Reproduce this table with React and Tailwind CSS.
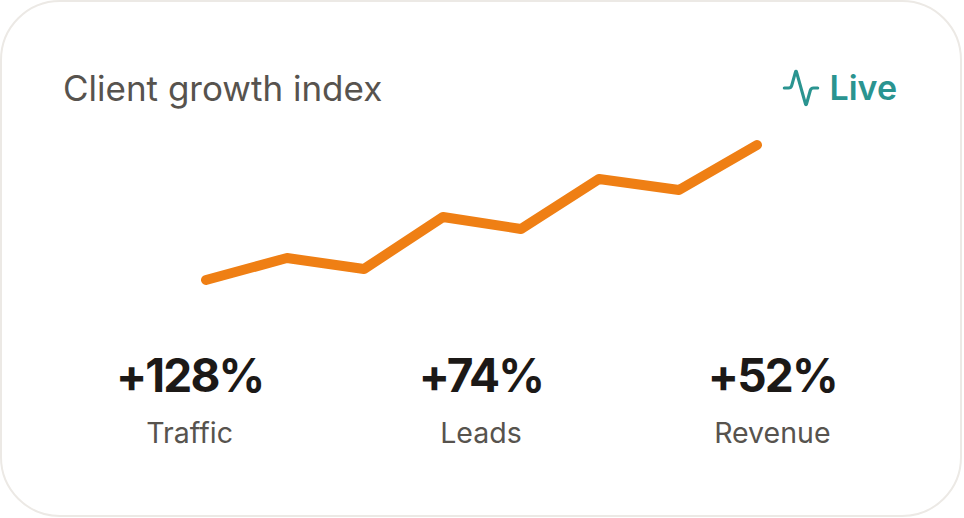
import React from 'react';
import { Activity } from 'lucide-react';

const points = [
  [206, 280],
  [287, 258],
  [364, 269],
  [443, 217],
  [521, 229],
  [599, 179],
  [679, 190],
  [757, 145],
];

const stats = [
  { value: '+128%', label: 'Traffic' },
  { value: '+74%', label: 'Leads' },
  { value: '+52%', label: 'Revenue' },
];

export default function App() {
  // svg sits below the header, which ends at y=108 on the page
  const line = points.map(([x, y]) => `${x - 2},${y - 108}`).join(' ');

  return (
    <div className="w-[964px] h-[518px] bg-white" style={{ fontFamily: 'Inter, "Noto Sans", sans-serif' }}>
      <div className="w-[962px] h-[517px] rounded-[60px] border-2 border-[#ece9e5] bg-white flex flex-col">
        <div className="flex items-center justify-between pl-[61px] pr-[63px] pt-[66px] h-[106px]">
          <h2 className="text-[35px] leading-[40px] text-[#57534e]">Client growth index</h2>
          <div className="flex items-center gap-[8px] text-[#2a9490]">
            <Activity size={40} strokeWidth={1.9} />
            <span className="text-[34px] leading-[40px] font-semibold">Live</span>
          </div>
        </div>

        <svg width="958" height="192" className="block">
          <polyline
            points={line}
            fill="none"
            stroke="#ef7f14"
            strokeWidth="10"
            strokeLinecap="round"
            strokeLinejoin="round"
          />
        </svg>

        <div className="grid grid-cols-3 px-[42px] mt-[52px]">
          {stats.map((s) => (
            <div key={s.label} className="flex flex-col items-center">
              <span className="text-[46px] leading-none font-bold tracking-[-0.04em] text-[#1c1917]">{s.value}</span>
              <span className="mt-[21px] text-[28.5px] leading-none text-[#57534e]">{s.label}</span>
            </div>
          ))}
        </div>
      </div>
    </div>
  );
}
